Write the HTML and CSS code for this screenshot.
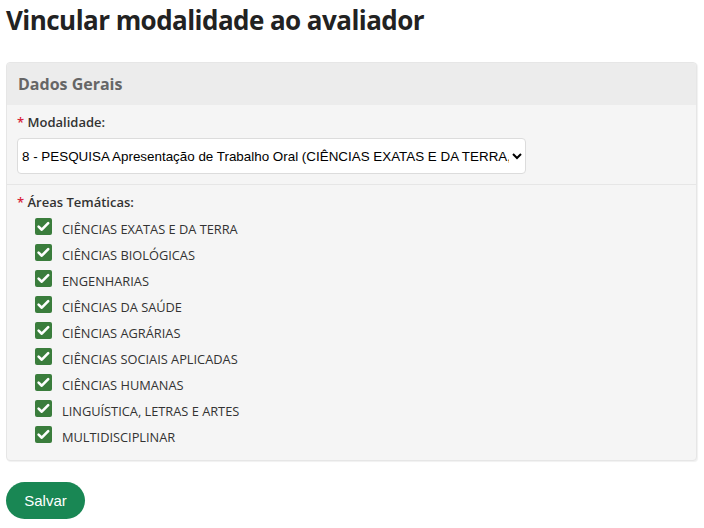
FILE: index.html
```html
<!DOCTYPE html>
<html lang="pt-BR">
<head>
  <meta charset="UTF-8" />
  <meta name="viewport" content="width=device-width, initial-scale=1.0" />
  <title>Vincular modalidade ao avaliador</title>
  <link rel="stylesheet" href="styles.css">
</head>
<body>
  <h1 class="page-title">Vincular modalidade ao avaliador</h1>

  <div class="panel">
    <div class="panel-heading">Dados Gerais</div>

    <div class="panel-section">
      <label class="field-label" for="modalidade"><span class="req">*</span> Modalidade:</label>
      <select id="modalidade" class="field-select">
        <option>8 - PESQUISA Apresentação de Trabalho Oral (CIÊNCIAS EXATAS E DA TERRA, ENGENHARIAS)</option>
      </select>
    </div>

    <div class="panel-section">
      <div class="field-label"><span class="req">*</span> Áreas Temáticas:</div>
      <ul class="check-list">
        <li><span class="check"></span>CIÊNCIAS EXATAS E DA TERRA</li>
        <li><span class="check"></span>CIÊNCIAS BIOLÓGICAS</li>
        <li><span class="check"></span>ENGENHARIAS</li>
        <li><span class="check"></span>CIÊNCIAS DA SAÚDE</li>
        <li><span class="check"></span>CIÊNCIAS AGRÁRIAS</li>
        <li><span class="check"></span>CIÊNCIAS SOCIAIS APLICADAS</li>
        <li><span class="check"></span>CIÊNCIAS HUMANAS</li>
        <li><span class="check"></span>LINGUÍSTICA, LETRAS E ARTES</li>
        <li><span class="check"></span>MULTIDISCIPLINAR</li>
      </ul>
    </div>
  </div>

  <button class="btn-save">Salvar</button>
</body>
</html>
```

FILE: styles.css
```css
* {
  box-sizing: border-box;
}
body {
  font-family: "Open Sans", Arial, sans-serif;
  margin: 0;
  padding: 0 7px 0 6px;
  color: #333;
  background: #fff;
}
.page-title {
  font-size: 26px;
  font-weight: 700;
  color: #222;
  margin: 0;
  padding-top: 2px;
  line-height: 36px;
  letter-spacing: -0.55px;
}
.panel {
  margin-top: 24px;
  background: #f5f5f5;
  border: 1px solid #e6e6e6;
  border-radius: 4px;
  box-shadow: 1px 1px 1px rgba(0, 0, 0, 0.06);
}
.panel-heading {
  background: #ececec;
  color: #666;
  font-size: 16px;
  font-weight: 700;
  height: 42px;
  line-height: 42px;
  padding: 0 11px;
  border-radius: 4px 4px 0 0;
}
.panel-section {
  padding: 8px 10px 10px;
  border-bottom: 1px solid #e6e6e6;
}
.panel-section:last-child {
  border-bottom: none;
  padding-bottom: 10px;
}
.field-label {
  display: block;
  font-size: 13px;
  font-weight: 600;
  color: #333;
  line-height: 18px;
}
.req {
  color: #d9243c;
}
.field-select {
  display: block;
  margin-top: 7px;
  width: 509px;
  height: 36px;
  padding: 0;
  font-family: Arial, "Liberation Sans", sans-serif;
  font-size: 13.4px;
  color: #000;
  background: #fff;
  border: 1px solid #dcdcdc;
  border-radius: 4px;
}
.check-list {
  list-style: none;
  margin: 5px 0 0;
  padding: 0 0 0 18px;
}
.check-list li {
  display: flex;
  align-items: center;
  height: 26px;
  font-size: 12.8px;
  color: #333;
}
.check {
  width: 17px;
  height: 17px;
  margin: -6px 10px 0 0;
  border-radius: 2px;
  background: #3a7d3c url("data:image/svg+xml,%3Csvg xmlns='http://www.w3.org/2000/svg' viewBox='0 0 17 17'%3E%3Cpath d='M3.6 8.6l3.2 3.1 6.4-6.6' fill='none' stroke='%23fff' stroke-width='2.6' stroke-linecap='round' stroke-linejoin='round'/%3E%3C/svg%3E") center / 17px 17px no-repeat;
}
.btn-save {
  margin-top: 21px;
  width: 79px;
  height: 37px;
  border: none;
  border-radius: 19px;
  background: #198754;
  color: #fff;
  font-family: Arial, "Liberation Sans", sans-serif;
  font-size: 15px;
  cursor: pointer;
}
```
